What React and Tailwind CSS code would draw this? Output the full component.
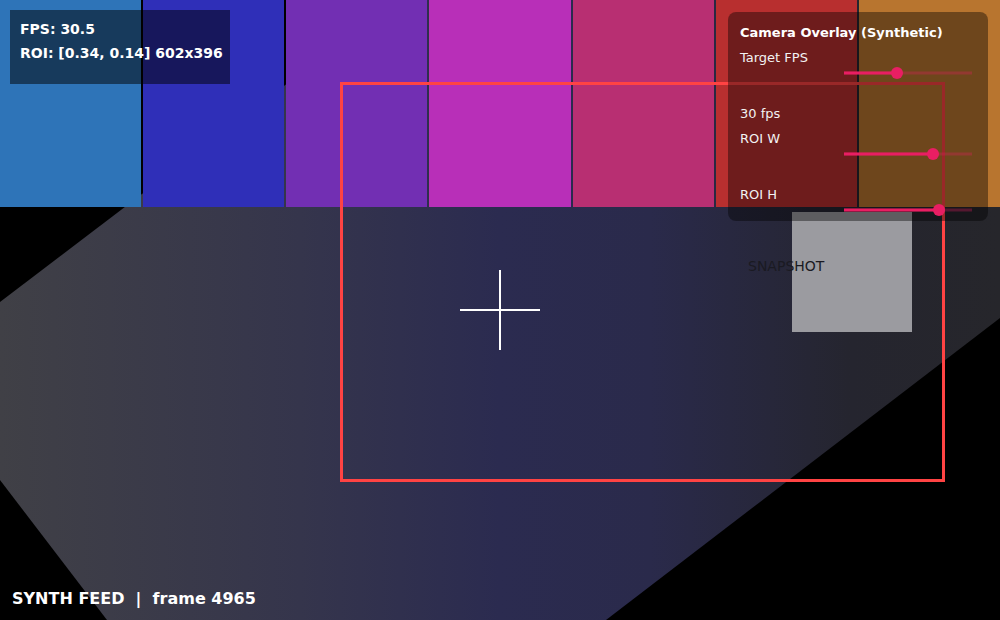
const BARS = ['#2e74b8', '#2f2fb8', '#722fb3', '#b82fb8', '#b82f72', '#b82f2f', '#b8752f'];

const SLIDERS = [
  { label: 'Target FPS', pct: 41.4, value: '30 fps' },
  { label: 'ROI W', pct: 69.5 },
  { label: 'ROI H', pct: 74.2 },
];

function Slider({ pct }) {
  return (
    <div className="relative mb-[26px] ml-[104px] h-[14px] w-[128px]">
      <div className="absolute left-0 right-0 top-1/2 h-[3px] -translate-y-1/2 bg-[#e91e63]/30" />
      <div className="absolute left-0 top-1/2 h-[3px] -translate-y-1/2 bg-[#e91e63]" style={{ width: `${pct}%` }} />
      <div
        className="absolute top-1/2 h-3 w-3 -translate-x-1/2 -translate-y-1/2 rounded-full bg-[#e91e63]"
        style={{ left: `${pct}%` }}
      />
    </div>
  );
}

function Control({ label, pct, value }) {
  return (
    <div className="flex flex-col">
      <div className="h-4">{label}</div>
      <Slider pct={pct} />
      {value && <div className="mb-[9px] h-4">{value}</div>}
    </div>
  );
}

function Backdrop() {
  // the lit floor shape behind the colour bars
  return (
    <svg className="absolute inset-0" width="1000" height="620" viewBox="0 0 1000 620">
      <defs>
        <linearGradient id="floor" x1="0" y1="0" x2="1" y2="0">
          <stop offset="0" stopColor="#404046" />
          <stop offset="0.3" stopColor="#35354c" />
          <stop offset="0.5" stopColor="#2b2b50" />
          <stop offset="0.65" stopColor="#2a2a4b" />
          <stop offset="0.85" stopColor="#25252f" />
          <stop offset="1" stopColor="#26262b" />
        </linearGradient>
      </defs>
      <polygon points="397,0 1000,0 1000,318 606,620 107,620 0,480 0,302" fill="url(#floor)" />
    </svg>
  );
}

export default function App() {
  return (
    <div className="relative h-[620px] w-[1000px] overflow-hidden bg-black font-['DejaVu_Sans',sans-serif]">
      <Backdrop />

      <div className="relative flex h-[207px] gap-[2px]">
        {BARS.map((c) => (
          <div key={c} className="flex-1" style={{ backgroundColor: c }} />
        ))}
      </div>

      {/* stats */}
      <div className="absolute left-[10px] top-[10px] flex h-[74px] w-[220px] flex-col whitespace-nowrap bg-black/50 px-[10px] pt-[7px] text-[14px] font-bold leading-6 text-white">
        <span>FPS: 30.5</span>
        <span>ROI: [0.34, 0.14] 602x396</span>
      </div>

      {/* roi */}
      <div className="absolute left-[340px] top-[82px] h-[400px] w-[605px] border-[3px] border-[#ff4343]" />

      {/* crosshair */}
      <div className="absolute left-[460px] top-[309px] h-[2px] w-[80px] bg-white" />
      <div className="absolute left-[499px] top-[270px] h-[80px] w-[2px] bg-white" />

      <div className="absolute left-[792px] top-[212px] h-[120px] w-[120px] bg-[#9b9ba0]" />
      <div className="absolute left-[748px] top-[258px] text-[14px] leading-4 text-[#1a1a22]">SNAPSHOT</div>

      {/* controls */}
      <div className="absolute left-[728px] top-[12px] flex h-[209px] w-[260px] flex-col gap-[9px] rounded-lg bg-black/40 px-3 pt-[13px] text-[13px] leading-4 text-[#f2f2f2]">
        <div className="font-bold text-white">Camera Overlay (Synthetic)</div>
        <div className="flex flex-col">
          {SLIDERS.map((s) => (
            <Control key={s.label} {...s} />
          ))}
        </div>
      </div>

      <div className="absolute bottom-[11px] left-[12px] whitespace-pre text-[16px] font-bold leading-5 text-white">
        SYNTH FEED  |  frame 4965
      </div>
    </div>
  );
}
